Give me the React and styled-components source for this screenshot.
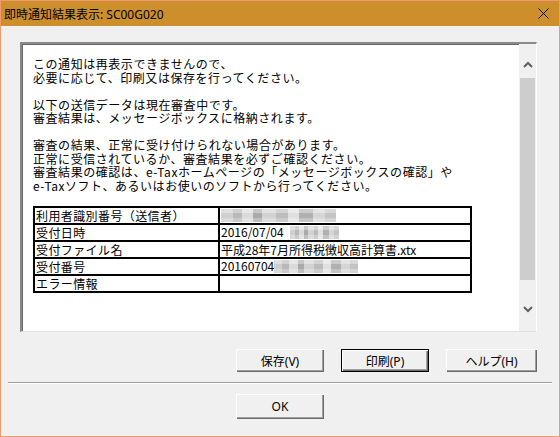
import React from "react";
import styled, { createGlobalStyle } from "styled-components";

const Global = createGlobalStyle`
  html, body { margin: 0; padding: 0; background: #f0f0f0; }
  body { font-family: "Noto Sans", "Noto Sans CJK JP", sans-serif; }
  * { box-sizing: border-box; }
`;

const Window = styled.div`
  width: 560px;
  height: 437px;
  border: 1px solid #f09a6e;
  border-top: none;
  background: #f0f0f0;
  display: flex;
  flex-direction: column;
  overflow: hidden;
`;

const TitleBar = styled.div`
  height: 26px;
  flex: none;
  background: #cd8e2c;
  border-top: 1px solid #f09a6e;
  display: flex;
  align-items: center;
  justify-content: space-between;
  padding: 0 10px 0 3px;
  font-family: "Noto Sans", "Noto Sans CJK JP", sans-serif;
  font-size: 12px;
  color: #000;
`;

const Body = styled.div`
  flex: 1;
  display: flex;
  flex-direction: column;
  padding: 16px 0 0 0;
`;

const Panel = styled.div`
  margin: 0 22px 0 19px;
  height: 290px;
  display: flex;
  background: #fff;
  border-top: 2px solid #8a8a8a;
  border-left: 2px solid #8a8a8a;
  border-right: 1px solid #fff;
  border-bottom: 1px solid #e3e3e3;
  box-shadow: inset 1px 1px 0 #696969;
`;

const Content = styled.div`
  flex: 1;
  padding: 13px 0 0 11px;
  font-family: "Noto Sans CJK JP", sans-serif;
  font-size: 12px;
  letter-spacing: 0.55px;
  line-height: 13.5px;
  color: #000;
`;

const Para = styled.p`
  margin: 0 0 13.5px 0;
`;

const Table = styled.table`
  border-collapse: collapse;
  width: 439px;
  margin-top: 12px;
  border: 2px solid #000;
  font-size: 12px;
  letter-spacing: 0.3px;
`;

const Cell = styled.td`
  border: 2px solid #000;
  height: 17px;
  padding: 0 1px;
  line-height: 13px;
  white-space: nowrap;
  width: ${(p) => (p.$label ? "185px" : "auto")};
  letter-spacing: ${(p) => (p.$label ? "0.4px" : "0")};
`;

const Blur = styled.span`
  display: inline-block;
  vertical-align: -2px;
  width: ${(p) => p.$w}px;
  height: 13px;
  margin-left: ${(p) => p.$ml || 0}px;
  background:
    linear-gradient(180deg, rgba(255,255,255,0.35) 0 30%, rgba(0,0,0,0) 30% 70%, rgba(255,255,255,0.25) 70% 100%),
    linear-gradient(90deg,
      #cfcfcf 0 10%, #b9b9b9 10% 18%, #dadada 18% 28%, #a9a9a9 28% 36%,
      #d2d2d2 36% 48%, #bcbcbc 48% 58%, #e0e0e0 58% 68%, #b0b0b0 68% 80%,
      #d6d6d6 80% 90%, #c4c4c4 90% 100%);
`;

const ScrollBar = styled.div`
  width: 17px;
  flex: none;
  background: #f0f0f0;
  display: flex;
  flex-direction: column;
`;

const Arrow = styled.div`
  height: ${(p) => p.$h}px;
  display: flex;
  justify-content: center;
  align-items: flex-start;
  padding-top: ${(p) => p.$pt}px;
  flex: none;
`;

const Thumb = styled.div`
  height: 202px;
  margin: 0 1px;
  background: #cdcdcd;
  flex: none;
`;

const Track = styled.div`
  flex: 1;
`;

const ButtonRow = styled.div`
  display: flex;
  justify-content: flex-end;
  gap: 17px;
  padding-right: 22px;
  margin-top: 17px;
`;

const Button = styled.button`
  width: ${(p) => p.$w || 88}px;
  height: ${(p) => p.$h || 23}px;
  background: #f0f0f0;
  font-family: "Noto Sans", "Noto Sans CJK JP", sans-serif;
  font-size: 12px;
  color: #000;
  padding: 0;
  border: ${(p) => (p.$focus ? "1px solid #000" : "none")};
  box-shadow: inset 1px 1px 0 #fff, inset -1px -1px 0 #696969, inset -2px -2px 0 #a0a0a0;
  cursor: default;
`;

const Separator = styled.div`
  margin: 10px 7px 0 7px;
  height: 2px;
  border-top: 1px solid #a0a0a0;
  border-bottom: 1px solid #fff;
`;

const OkRow = styled.div`
  display: flex;
  padding-left: 235px;
  margin-top: 10px;
`;

const Chevron = ({ up }) => (
  <svg width="10" height="7" viewBox="0 0 10 7">
    <polyline
      points={up ? "1,6 5,2 9,6" : "1,1 5,5 9,1"}
      fill="none"
      stroke="#606060"
      strokeWidth="2"
    />
  </svg>
);

const CloseIcon = () => (
  <svg width="11" height="11" viewBox="0 0 11 11">
    <path d="M0.5 0.5 L10.5 10.5 M10.5 0.5 L0.5 10.5" stroke="#000" strokeWidth="1" fill="none" />
  </svg>
);

const rows = [
  { label: "利用者識別番号（送信者）", value: null, blur: { w: 115, ml: 0 } },
  { label: "受付日時", value: "2016/07/04", blur: { w: 49, ml: 6 } },
  { label: "受付ファイル名", value: "平成28年7月所得税徴収高計算書.xtx" },
  { label: "受付番号", value: "20160704", blur: { w: 84, ml: 0 } },
  { label: "エラー情報", value: "" },
];

export default function App() {
  return (
    <>
      <Global />
      <Window>
        <TitleBar>
          <span>即時通知結果表示: SC00G020</span>
          <CloseIcon />
        </TitleBar>
        <Body>
          <Panel>
            <Content>
              <Para>
                この通知は再表示できませんので、
                <br />
                必要に応じて、印刷又は保存を行ってください。
              </Para>
              <Para>
                以下の送信データは現在審査中です。
                <br />
                審査結果は、メッセージボックスに格納されます。
              </Para>
              <Para>
                審査の結果、正常に受け付けられない場合があります。
                <br />
                正常に受信されているか、審査結果を必ずご確認ください。
                <br />
                審査結果の確認は、e-Taxホームページの「メッセージボックスの確認」や
                <br />
                e-Taxソフト、あるいはお使いのソフトから行ってください。
              </Para>
              <Table>
                <tbody>
                  {rows.map((r) => (
                    <tr key={r.label}>
                      <Cell $label>{r.label}</Cell>
                      <Cell>
                        {r.value}
                        {r.blur && <Blur $w={r.blur.w} $ml={r.blur.ml} />}
                      </Cell>
                    </tr>
                  ))}
                </tbody>
              </Table>
            </Content>
            <ScrollBar>
              <Arrow $h={34} $pt={17}>
                <Chevron up />
              </Arrow>
              <Thumb />
              <Track />
              <Arrow $h={34} $pt={9}>
                <Chevron />
              </Arrow>
            </ScrollBar>
          </Panel>
          <ButtonRow>
            <Button>保存(V)</Button>
            <Button $focus>印刷(P)</Button>
            <Button $w={91}>ヘルプ(H)</Button>
          </ButtonRow>
          <Separator />
          <OkRow>
            <Button $h={25}>OK</Button>
          </OkRow>
        </Body>
      </Window>
    </>
  );
}
